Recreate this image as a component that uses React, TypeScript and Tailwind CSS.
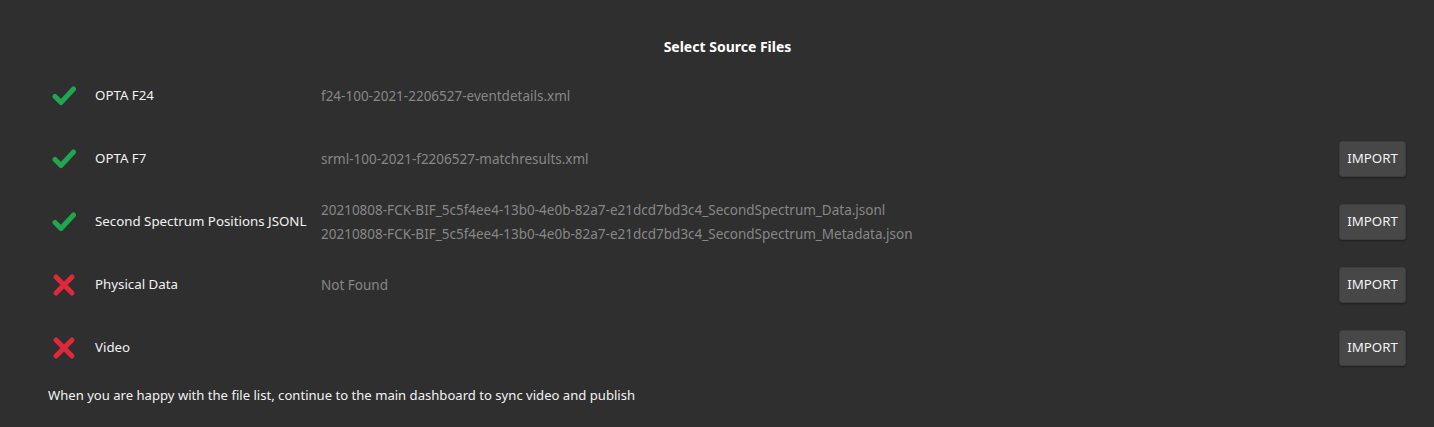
import { type ReactNode } from "react";

type SourceRow = {
  ok: boolean;
  label: string;
  files: string[];
  importable: boolean;
};

const rows: SourceRow[] = [
  { ok: true, label: "OPTA F24", files: ["f24-100-2021-2206527-eventdetails.xml"], importable: false },
  { ok: true, label: "OPTA F7", files: ["srml-100-2021-f2206527-matchresults.xml"], importable: true },
  {
    ok: true,
    label: "Second Spectrum Positions JSONL",
    files: [
      "20210808-FCK-BIF_5c5f4ee4-13b0-4e0b-82a7-e21dcd7bd3c4_SecondSpectrum_Data.jsonl",
      "20210808-FCK-BIF_5c5f4ee4-13b0-4e0b-82a7-e21dcd7bd3c4_SecondSpectrum_Metadata.json",
    ],
    importable: true,
  },
  { ok: false, label: "Physical Data", files: ["Not Found"], importable: true },
  { ok: false, label: "Video", files: [], importable: true },
];

function CheckIcon() {
  return (
    <svg width="24" height="22" viewBox="0 0 24 22">
      <path d="M3 11.5 L9 17.5 L21.5 4" fill="none" stroke="#1fa64f" strokeWidth="5" strokeLinecap="round" strokeLinejoin="round" />
    </svg>
  );
}

function CrossIcon() {
  return (
    <svg width="24" height="24" viewBox="0 0 24 24">
      <path d="M4 4 L20 20 M20 4 L4 20" fill="none" stroke="#e0283b" strokeWidth="5" strokeLinecap="round" />
    </svg>
  );
}

function Row({ row }: { row: SourceRow }) {
  let icon: ReactNode = row.ok ? <CheckIcon /> : <CrossIcon />;
  return (
    <div className="flex h-[63px] items-center">
      <div className="flex w-[47px] shrink-0 items-center pl-[4px]">{icon}</div>
      <div className="w-[226px] shrink-0 text-[13.3px] text-[#f2f2f2]">{row.label}</div>
      <div className="flex flex-1 flex-col gap-[6px] text-[13.5px] text-[#878787]">
        {row.files.map((f) => (
          <div key={f} className="leading-[18px]">{f}</div>
        ))}
      </div>
      {row.importable && (
        <button
          type="button"
          className="mr-[28px] h-[36px] w-[67px] rounded-[3px] border border-[#3d3d3d] bg-[#474747] text-[13.3px] text-[#f2f2f2] shadow-[0_1px_2px_rgba(0,0,0,0.35)]"
        >
          IMPORT
        </button>
      )}
    </div>
  );
}

export default function App() {
  return (
    <div
      className="h-[427px] w-full bg-[#2f2f2f] pl-[48px]"
      style={{ fontFamily: '"Noto Sans", "Open Sans", sans-serif' }}
    >
      <div className="pt-[38px] pr-[27px] text-center text-[14px] font-bold leading-[18px] text-white">
        Select Source Files
      </div>
      <div className="mt-[8px]">
        {rows.map((r) => (
          <Row key={r.label} row={r} />
        ))}
      </div>
      <div className="mt-[7px] text-[13.1px] leading-[18px] text-[#f2f2f2]">
        When you are happy with the file list, continue to the main dashboard to sync video and publish
      </div>
    </div>
  );
}
